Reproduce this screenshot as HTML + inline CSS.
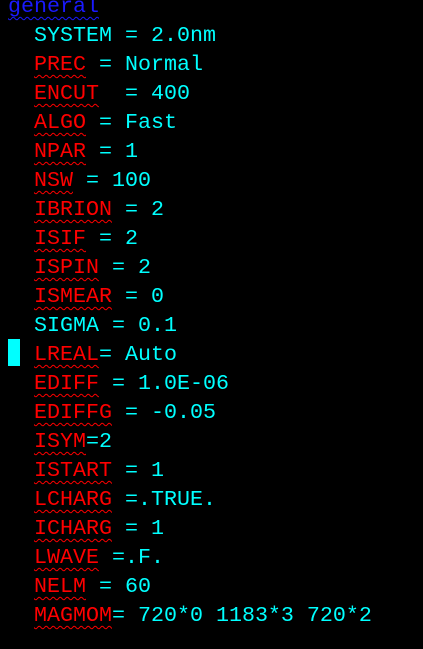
<!DOCTYPE html>
<html><head><style>
html,body{margin:0;padding:0;background:#000;width:423px;height:649px;overflow:hidden}
.l{position:absolute;left:8px;height:29px;line-height:29px;font-family:"Liberation Mono",monospace;font-size:21.67px;color:#00ffff;white-space:pre;margin-top:2px}
.r{color:#ff0000;text-decoration:underline wavy #ff0000;text-decoration-thickness:1px;text-underline-offset:4px}
.b{color:#1a1aff;text-decoration:underline wavy #1a1aff;text-decoration-thickness:1px;text-underline-offset:4px}
.cur{position:absolute;left:8px;top:339px;width:12px;height:27px;background:#00ffff}
</style></head><body>
<div class="l" style="top:-10px"><span class="b">general</span></div>
<div class="l" style="top:19px">  SYSTEM = 2.0nm</div>
<div class="l" style="top:48px">  <span class="r">PREC</span> = Normal</div>
<div class="l" style="top:77px">  <span class="r">ENCUT</span>  = 400</div>
<div class="l" style="top:106px">  <span class="r">ALGO</span> = Fast</div>
<div class="l" style="top:135px">  <span class="r">NPAR</span> = 1</div>
<div class="l" style="top:164px">  <span class="r">NSW</span> = 100</div>
<div class="l" style="top:193px">  <span class="r">IBRION</span> = 2</div>
<div class="l" style="top:222px">  <span class="r">ISIF</span> = 2</div>
<div class="l" style="top:251px">  <span class="r">ISPIN</span> = 2</div>
<div class="l" style="top:280px">  <span class="r">ISMEAR</span> = 0</div>
<div class="l" style="top:309px">  SIGMA = 0.1</div>
<div class="cur"></div>
<div class="l" style="top:338px">  <span class="r">LREAL</span>= Auto</div>
<div class="l" style="top:367px">  <span class="r">EDIFF</span> = 1.0E-06</div>
<div class="l" style="top:396px">  <span class="r">EDIFFG</span> = -0.05</div>
<div class="l" style="top:425px">  <span class="r">ISYM</span>=2</div>
<div class="l" style="top:454px">  <span class="r">ISTART</span> = 1</div>
<div class="l" style="top:483px">  <span class="r">LCHARG</span> =.TRUE.</div>
<div class="l" style="top:512px">  <span class="r">ICHARG</span> = 1</div>
<div class="l" style="top:541px">  <span class="r">LWAVE</span> =.F.</div>
<div class="l" style="top:570px">  <span class="r">NELM</span> = 60</div>
<div class="l" style="top:599px">  <span class="r">MAGMOM</span>= 720*0 1183*3 720*2</div>
</body></html>
